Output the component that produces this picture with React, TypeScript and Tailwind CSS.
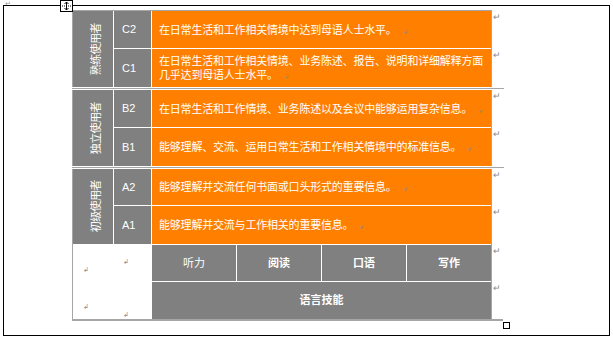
import React from 'react';

type Level = { code: string; text: string; h: string };
type Group = { label: string; rows: string; levels: Level[] };

const groups: Group[] = [
  {
    label: '熟练使用者',
    rows: 'grid-rows-[37px_38px]',
    levels: [
      { code: 'C2', h: 'h-[37px]', text: '在日常生活和工作相关情境中达到母语人士水平。' },
      { code: 'C1', h: 'h-[38px]', text: '在日常生活和工作相关情境、业务陈述、报告、说明和详细解释方面几乎达到母语人士水平。' },
    ],
  },
  {
    label: '独立使用者',
    rows: 'grid-rows-[37px_38px]',
    levels: [
      { code: 'B2', h: 'h-[37px]', text: '在日常生活和工作情境、业务陈述以及会议中能够运用复杂信息。' },
      { code: 'B1', h: 'h-[38px]', text: '能够理解、交流、运用日常生活和工作相关情境中的标准信息。' },
    ],
  },
  {
    label: '初级使用者',
    rows: 'grid-rows-[36px_38px]',
    levels: [
      { code: 'A2', h: 'h-[36px]', text: '能够理解并交流任何书面或口头形式的重要信息。' },
      { code: 'A1', h: 'h-[38px]', text: '能够理解并交流与工作相关的重要信息。' },
    ],
  },
];

const skills = ['听力', '阅读', '口语', '写作'];

// little word-style formatting marks
function ReturnMark() {
  return <span className="block pl-[1px] pt-[2px] text-[9px] leading-none text-[#8a8a8a]">↵</span>;
}

function CellMark() {
  return <span className="ml-[6px] text-[6px] leading-none text-[#8a8a8a]">↲</span>;
}

function Anchor() {
  return (
    <div className="absolute left-[60px] top-0 h-[12px] w-[13px] border border-black bg-white">
      <svg width="11" height="10" viewBox="0 0 11 10" className="block">
        <path d="M5.5 1 V9" stroke="black" strokeWidth="1" />
        <path d="M3.5 3 L5.5 1 L7.5 3 M3.5 7 L5.5 9 L7.5 7" stroke="black" strokeWidth="1" fill="none" />
        <path d="M1 5 H10" stroke="black" strokeWidth="1" strokeDasharray="1 1" />
      </svg>
    </div>
  );
}

export default function App() {
  return (
    <div className="relative h-[339px] w-[613px] overflow-hidden bg-white font-['Liberation_Sans','Noto_Sans_CJK_SC',sans-serif]">
      <span className="absolute left-[5px] top-0 text-[7px] leading-none text-[#9a9a9a]">↵</span>
      <Anchor />

      <div className="pl-[3px] pt-[5px]">
        <div className="h-[331px] w-[607px] border border-black">
          <div className="ml-[68px] mt-[4px]">
            {/* top border */}
            <div className="h-px w-[420px] bg-[#a6a6a6]" />

            {groups.map((g, gi) => (
              <div key={g.label}>
                {gi > 0 && <div className="my-px h-px w-[432px] bg-[#a6a6a6]" />}
                <div className="flex">
                  <div className={`grid w-[420px] grid-cols-[40px_37px_339px] gap-px border-x border-[#a6a6a6] bg-white ${g.rows}`}>
                    <div className="row-span-2 flex items-center justify-center bg-[#808080] pl-[6px]">
                      <span className="-rotate-90 whitespace-nowrap text-[11px] tracking-[-0.6px] text-white">{g.label}</span>
                    </div>
                    {g.levels.map((l, li) => (
                      <React.Fragment key={l.code}>
                        <div className={`flex items-center bg-[#808080] pl-[8px] text-[11px] text-white ${li === 0 ? 'col-start-2 row-start-1' : 'col-start-2 row-start-2'}`}>
                          {l.code}
                        </div>
                        <div className={`flex items-center bg-[#ff8000] pl-[7px] pr-[4px] text-[11px] leading-[14px] tracking-[-0.2px] text-white ${li === 0 ? 'col-start-3 row-start-1' : 'col-start-3 row-start-2'}`}>
                          <p>
                            {l.text}
                            <CellMark />
                          </p>
                        </div>
                      </React.Fragment>
                    ))}
                  </div>
                  <div className="flex flex-col gap-px">
                    {g.levels.map((l) => (
                      <div key={l.code} className={l.h}>
                        <ReturnMark />
                      </div>
                    ))}
                  </div>
                </div>
              </div>
            ))}

            {/* skills rows */}
            <div className="flex">
              <div className="grid w-[420px] grid-cols-[40px_37px_339px] grid-rows-[36px_37px] gap-px border-x border-[#a6a6a6] bg-white pt-px">
                <div className="pl-[10px] pt-[10px]">
                  <span className="text-[7px] leading-none text-[#8a8a8a]">↲</span>
                </div>
                <div className="pl-[9px] pt-[2px]">
                  <span className="text-[7px] leading-none text-[#8a8a8a]">↲</span>
                </div>
                <div className="grid grid-cols-4 gap-px">
                  {skills.map((s, i) => (
                    <div key={s} className={`flex items-center justify-center bg-[#808080] text-[11px] text-white ${i > 0 ? 'font-bold' : ''}`}>
                      {s}
                    </div>
                  ))}
                </div>
                <div className="pl-[10px] pt-[10px]">
                  <span className="text-[7px] leading-none text-[#8a8a8a]">↲</span>
                </div>
                <div className="pl-[9px] pt-[18px]">
                  <span className="text-[7px] leading-none text-[#8a8a8a]">↲</span>
                </div>
                <div className="flex items-center justify-center bg-[#808080] text-[11px] font-bold text-white">语言技能</div>
              </div>
              <div className="flex flex-col gap-px pt-px">
                <div className="h-[36px]">
                  <ReturnMark />
                </div>
                <div className="h-[37px]">
                  <ReturnMark />
                </div>
              </div>
            </div>

            {/* bottom border and resize handle */}
            <div className="h-[2px] w-[431px] bg-[#a6a6a6]" />
            <div className="ml-[431px] mt-[1px] h-[7px] w-[7px] border border-black bg-white" />
          </div>
        </div>
      </div>
    </div>
  );
}
